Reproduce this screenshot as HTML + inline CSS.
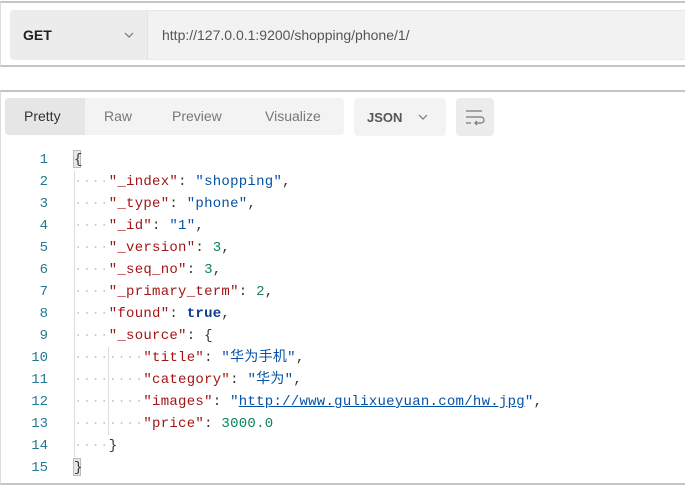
<!DOCTYPE html>
<html><head><meta charset="utf-8"><style>
*{margin:0;padding:0;box-sizing:border-box}
body{width:685px;height:485px;background:#fff;position:relative;overflow:hidden;font-family:"Liberation Sans","Noto Sans CJK SC",sans-serif}
.a{position:absolute}
.code{font-family:"Liberation Mono","Noto Sans CJK SC",monospace;font-size:14px;white-space:pre;line-height:22px;letter-spacing:0.27px}
.ln{color:#237893;text-align:right;width:48px;left:0;letter-spacing:0}
.k{color:#a31515}.s{color:#0451a5}.n{color:#098658}.b{font-weight:bold;color:#0e3a8c}
.p{color:#333}
.d{color:#ccc}
u{text-decoration:underline;text-decoration-color:#0451a5}
</style></head><body>
<div class="a" style="left:0;top:1px;width:685px;height:66px;border-top:2px solid #c4c4c4;border-bottom:2px solid #c4c4c4;border-left:1px solid #ddd"></div>
<div class="a" style="left:10px;top:10px;width:675px;height:50px;background:#f2f2f2;border:1px solid #e8e8e8;border-right:none;border-radius:4px 0 0 4px"></div>
<div class="a" style="left:10px;top:10px;width:138px;height:50px;background:#ececec;border-radius:4px 0 0 4px;border-right:1px solid #e2e2e2"></div>
<div class="a" style="left:23px;top:27px;font-size:14px;font-weight:bold;color:#222">GET</div>
<svg class="a" style="left:123px;top:30px" width="12" height="10"><path d="M2 3l4 4 4-4" fill="none" stroke="#777" stroke-width="1.2"/></svg>
<div class="a" style="left:162px;top:27px;font-size:14px;color:#555">http://127.0.0.1:9200/shopping/phone/1/</div>

<div class="a" style="left:0;top:90px;width:685px;height:395px;border-top:2px solid #c4c4c4;border-bottom:2px solid #c4c4c4;border-left:1px solid #ddd"></div>
<div class="a" style="left:5px;top:98px;width:339px;height:37px;background:#f3f3f3;border-radius:4px"></div>
<div class="a" style="left:5px;top:98px;width:80px;height:37px;background:#e6e6e6;border-radius:4px 0 0 4px"></div>
<div class="a" style="left:24px;top:108px;font-size:14px;color:#333">Pretty</div>
<div class="a" style="left:104px;top:108px;font-size:14px;color:#777">Raw</div>
<div class="a" style="left:172px;top:108px;font-size:14px;color:#777">Preview</div>
<div class="a" style="left:265px;top:108px;font-size:14px;color:#777">Visualize</div>
<div class="a" style="left:354px;top:98px;width:92px;height:38px;background:#f3f3f3;border-radius:4px"></div>
<div class="a" style="left:367px;top:110px;font-size:13px;font-weight:bold;color:#555">JSON</div>
<svg class="a" style="left:417px;top:112px" width="12" height="10"><path d="M2 3l4 4 4-4" fill="none" stroke="#777" stroke-width="1.2"/></svg>
<div class="a" style="left:456px;top:98px;width:38px;height:38px;background:#ececec;border-radius:4px"></div>
<svg class="a" style="left:465px;top:108px" width="20" height="18"><path d="M1 3h16M1 9h15a3 3 0 0 1 0 6h-6M12 13l-2 2 2 2M1 15h5" fill="none" stroke="#777" stroke-width="1.2"/></svg>

<div class="a code ln" style="top:149px">1
2
3
4
5
6
7
8
9
10
11
12
13
14
15</div>
<div class="a" style="left:74px;top:171px;width:1px;height:286px;background:#ddd"></div>
<div class="a" style="left:108px;top:347px;width:1px;height:88px;background:#ddd"></div>
<div class="a" style="left:73px;top:150px;width:8px;height:18px;background:#e8e8e8;border:1px solid #bbb"></div>
<div class="a" style="left:73px;top:458px;width:8px;height:18px;background:#e8e8e8;border:1px solid #bbb"></div>
<div class="a code p" style="left:74px;top:149px">{
<span class="d">····</span><span class="k">"_index"</span>: <span class="s">"shopping"</span>,
<span class="d">····</span><span class="k">"_type"</span>: <span class="s">"phone"</span>,
<span class="d">····</span><span class="k">"_id"</span>: <span class="s">"1"</span>,
<span class="d">····</span><span class="k">"_version"</span>: <span class="n">3</span>,
<span class="d">····</span><span class="k">"_seq_no"</span>: <span class="n">3</span>,
<span class="d">····</span><span class="k">"_primary_term"</span>: <span class="n">2</span>,
<span class="d">····</span><span class="k">"found"</span>: <span class="b">true</span>,
<span class="d">····</span><span class="k">"_source"</span>: {
<span class="d">········</span><span class="k">"title"</span>: <span class="s">"华为手机"</span>,
<span class="d">········</span><span class="k">"category"</span>: <span class="s">"华为"</span>,
<span class="d">········</span><span class="k">"images"</span>: <span class="s">"<u>http://www.gulixueyuan.com/hw.jpg</u>"</span>,
<span class="d">········</span><span class="k">"price"</span>: <span class="n">3000.0</span>
<span class="d">····</span>}
}</div>
</body></html>
